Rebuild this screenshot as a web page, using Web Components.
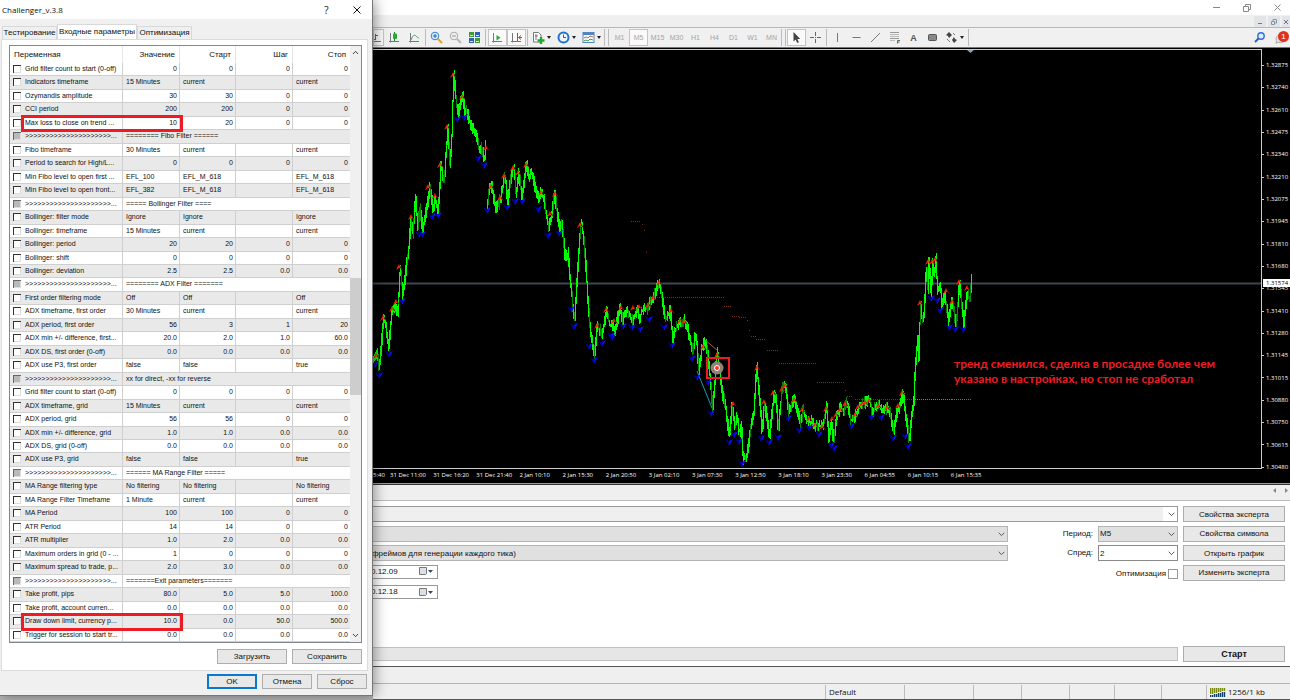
<!DOCTYPE html>
<html lang="ru">
<head>
<meta charset="utf-8">
<title>Challenger_v.3.8</title>
<style>
  html, body { margin: 0; }
  body {
    --ui: "Liberation Sans", Arial, sans-serif;
    --seg: "Open Sans", "Noto Sans", sans-serif;
    font: 8px/12px var(--ui);
    color: #111;
    background: #b4b4b4;
    min-height: 100vh;
    display: grid;
    grid-template-columns: 373px minmax(0, 1fr);
    align-items: start;
    overflow: hidden;
  }
  params-dialog { z-index: 1; }
</style>
</head>
<body>
<params-dialog heading="Challenger_v.3.8"></params-dialog>
<terminal-window>
  <terminal-toolbar></terminal-toolbar>
  <price-chart>тренд сменился, сделка в просадке более чем<br>указано в настройках, но стоп не сработал</price-chart>
  <strategy-tester></strategy-tester>
  <status-bar></status-bar>
</terminal-window>

<script>
const define = (name, html, setup) => customElements.define(name, class extends HTMLElement {
  connectedCallback() {
    if (this.shadowRoot) return;
    this.attachShadow({ mode: "open" }).innerHTML = html;
    if (setup) setup(this, this.shadowRoot);
  }
});

/* ---------- push button ---------- */
define("push-button", `
<style>
  :host { display: block; }
  button { box-sizing: border-box; width: 100%; height: 100%; margin: 0; padding: 0; border: 1px solid #adadad;
    background: #e8e8e8; color: #111; font: inherit; line-height: 13px; white-space: nowrap; }
  :host([primary]) button { border: 2px solid #0a78d0; line-height: 11px; }
</style>
<button type="button"><slot></slot></button>`);

/* ---------- drop-down ---------- */
define("drop-down", `
<style>
  :host { display: block; position: relative; min-width: 0; }
  select { appearance: none; box-sizing: border-box; display: block; width: 100%; height: 100%; margin: 0; padding: 0 14px 0 1px;
    border: 1px solid #b4b4b4; border-radius: 0; background: #e0e0e0; color: #111; font: inherit; line-height: 13px; }
  :host([open-left]) select { border-left: 0; padding-left: 0; text-indent: -1px; }
  :host([plain]) select { background: #fff; border-color: #8a8a8a; }
  :host([long]) select { background: linear-gradient(90deg, #efefef calc(100% - 14px), #fff 0); border-color: #999; }
  svg { position: absolute; right: 3px; top: 6px; pointer-events: none; }
</style>
<select><option></option></select>
<svg width="7" height="5" fill="none" stroke="#555"><path d="M.7.8 3.500 3.600 6.300.8"/></svg>`,
(el, root) => {
  root.querySelector("option").textContent = el.getAttribute("value") || "";
  root.querySelector("select").setAttribute("aria-label", el.getAttribute("label"));
});

/* ---------- parameter table ---------- */
const SEP = ">>>>>>>>>>>>>>>>>>>>>...";
const ROWS = [
  ["Grid filter count to start (0-off)", "0", "0", "0", "0"],
  ["Indicators timeframe", "15 Minutes", "current", "", "current"],
  ["Ozymandis amplitude", "30", "30", "0", "0"],
  ["CCI period", "200", "200", "0", "0"],
  ["Max loss to close on trend ...", "10", "20", "0", "0", "marked"],
  [SEP, "======== Fibo Filter ======"],
  ["Fibo timeframe", "30 Minutes", "current", "", "current"],
  ["Period to search for High/L...", "0", "0", "0", "0"],
  ["Min Fibo level to open first ...", "EFL_100", "EFL_M_618", "", "EFL_M_618"],
  ["Min Fibo level to open front...", "EFL_382", "EFL_M_618", "", "EFL_M_618"],
  [SEP, "===== Bollinger Filter ===="],
  ["Bollinger: filter mode", "Ignore", "Ignore", "", "Ignore"],
  ["Bollinger: timeframe", "15 Minutes", "current", "", "current"],
  ["Bollinger: period", "20", "20", "0", "0"],
  ["Bollinger: shift", "0", "0", "0", "0"],
  ["Bollinger: deviation", "2.5", "2.5", "0.0", "0.0"],
  [SEP, "======== ADX Filter ======="],
  ["First order filtering mode", "Off", "Off", "", "Off"],
  ["ADX timeframe, first order", "30 Minutes", "current", "", "current"],
  ["ADX period, first order", "56", "3", "1", "20"],
  ["ADX min +/- difference, first...", "20.0", "2.0", "1.0", "60.0"],
  ["ADX DS, first order (0-off)", "0.0", "0.0", "0.0", "0.0"],
  ["ADX use P3, first order", "false", "false", "", "true"],
  [SEP, "xx for direct, -xx for reverse"],
  ["Grid filter count to start (0-off)", "0", "0", "0", "0"],
  ["ADX timeframe, grid", "15 Minutes", "current", "", "current"],
  ["ADX period, grid", "56", "56", "0", "0"],
  ["ADX min +/- difference, grid", "1.0", "1.0", "0.0", "0.0"],
  ["ADX DS, grid (0-off)", "0.0", "0.0", "0.0", "0.0"],
  ["ADX use P3, grid", "false", "false", "", "true"],
  [SEP, "====== MA Range Filter ====="],
  ["MA Range filtering type", "No filtering", "No filtering", "", "No filtering"],
  ["MA Range Filter Timeframe", "1 Minute", "current", "", "current"],
  ["MA Period", "100", "100", "0", "0"],
  ["ATR Period", "14", "14", "0", "0"],
  ["ATR multiplier", "1.0", "2.0", "0.0", "0.0"],
  ["Maximum orders in grid (0 - ...", "1", "0", "0", "0"],
  ["Maximum spread to trade, p...", "2.0", "3.0", "0.0", "0.0"],
  [SEP, "=======Exit parameters======="],
  ["Take profit, pips", "80.0", "5.0", "5.0", "100.0"],
  ["Take profit, account curren...", "0.0", "0.0", "0.0", "0.0"],
  ["Draw down limit, currency p...", "10.0", "0.0", "50.0", "500.0", "marked"],
  ["Trigger for session to start tr...", "0.0", "0.0", "0.0", "0.0"]
];
define("param-table", `
<style>
  :host { display: grid; grid-template-columns: minmax(0, 1fr) 11px; border: 1px solid #828790; background: #fff; font-size: 7px; line-height: 12px; }
  table, thead, tbody { display: block; }
  tr { display: grid; grid-template-columns: 113px 57px 56px 57px minmax(0, 1fr); position: relative; }
  thead tr { height: 17px; font-size: 8px; }
  thead th { font-weight: normal; text-align: right; padding: 3px 4px 0; border-right: 1px solid #e6e6e6; }
  thead th:first-child { text-align: left; }
  th:last-child, td:last-child { border-right: 0 !important; }
  tbody { display: grid; grid-auto-rows: 1fr; height: 579px; }
  tbody tr:nth-child(even) { background: #e9e9e9; }
  td { padding: 0 2px 0 3px; border-right: 1px solid #cfcfcf; border-bottom: 1px solid #cfcfcf; text-align: right; white-space: nowrap; overflow: hidden; }
  td.t { text-align: left; }
  td.wide { grid-column: span 4; }
  label { display: flex; align-items: center; gap: 4px; }
  input { appearance: none; box-sizing: border-box; flex: none; width: 8px; height: 8px; margin: 0; background: #fff;
    border: solid #333; border-width: 1px 0 0 1px; box-shadow: inset -1px -1px #ddd; }
  input:disabled { background: #b9b9b9; border-color: #666; }
  tr.marked { z-index: 1; }
  tr.marked::after { content: ""; position: absolute; left: 11px; top: -2px; bottom: -2px; width: 156px; border: 3px solid #ed1c24; }
  .bar { background: #f0f0f0; display: flex; flex-direction: column; justify-content: space-between; align-items: center; padding: 4px 0; position: relative; }
  .bar i { position: absolute; left: 0; right: 0; top: 39%; height: 117px; background: #cdcdcd; }
</style>
<table>
  <thead><tr><th>Переменная</th><th>Значение</th><th>Старт</th><th>Шаг</th><th>Стоп</th></tr></thead>
  <tbody></tbody>
</table>
<div class="bar">
  <svg width="7" height="5" fill="none" stroke="#444"><path d="M1 4 3.500 1.300 6 4"/></svg><i></i>
  <svg width="7" height="5" fill="none" stroke="#444"><path d="M1 1 3.500 3.700 6 1"/></svg>
</div>`,
(el, root) => {
  const num = s => /^\d+(\.\d+)?$/.test(s);
  root.querySelector("tbody").innerHTML = ROWS.map(([name, ...v]) => {
    const sep = v.length === 1, mark = v[4] ? ' class="marked"' : "";
    const cells = sep ? `<td class="t wide">${v[0]}</td>`
      : v.slice(0, 4).map(c => `<td${num(c) ? "" : ' class="t"'}>${c}</td>`).join("");
    return `<tr${mark}><td class="t"><label><input type="checkbox"${sep ? " disabled" : ""}>${name.replace(/>/g, "&gt;")}</label></td>${cells}</tr>`;
  }).join("");
});

/* ---------- dialog ---------- */
define("params-dialog", `
<style>
  :host { display: flex; flex-direction: column; box-sizing: border-box; height: 696px; background: #f0f0f0;
    border-right: 1px solid #777; border-bottom: 1px solid #777; box-shadow: 2px 0 12px rgba(0,0,0,.4); }
  header { display: flex; align-items: center; height: 19px; background: #fff; padding: 0 10px 0 2px; font-family: var(--seg); }
  header span { flex: 1; }
  header button { width: 31px; height: 18px; border: 0; padding: 0; background: none; font: 10px var(--seg); color: #111; }
  header button:last-child { width: 30px; margin-right: -10px; }
  nav { display: flex; align-items: flex-end; height: 20px; padding-left: 2px; }
  nav button { height: 13px; border: 1px solid #d9d9d9; border-bottom: 0; background: #f0f0f0; padding: 0; font: inherit; color: #111; width: 55px; white-space: nowrap; }
  nav button.on { width: 80px; height: 15px; background: #fff; }
  main { flex: 1; display: flex; flex-direction: column; background: #fff; border: 1px solid #dcdcdc; margin: 0 4px 0 1px; padding: 5px 5px 0 7px; }
  .row { display: flex; justify-content: flex-end; gap: 5px; }
  .row push-button { width: 70px; height: 15px; }
  main .row { padding-top: 6px; }
  footer { padding: 3px 5px 6px; }
  footer push-button { width: 50px !important; }
</style>
<header><span></span><button type="button" aria-label="Справка">?</button><button type="button" aria-label="Закрыть"><svg width="8" height="8" stroke="#111"><path d="M.5.5l7 7M7.500.5l-7 7"/></svg></button></header>
<nav><button type="button">Тестирование</button><button type="button" class="on">Входные параметры</button><button type="button">Оптимизация</button></nav>
<main><param-table></param-table><div class="row"><push-button>Загрузить</push-button><push-button>Сохранить</push-button></div></main>
<footer class="row"><push-button primary>OK</push-button><push-button>Отмена</push-button><push-button>Сброс</push-button></footer>`,
(el, root) => { root.querySelector("header span").textContent = el.getAttribute("heading"); });

/* ---------- main window frame ---------- */
define("terminal-window", `
<style>
  :host { display: flex; flex-direction: column; height: 100vh; min-height: 700px; background: #efefef; }
  .cap { height: 15px; background: #fff; display: flex; justify-content: flex-end; align-items: center; gap: 23px; padding-right: 9px; }
  .mdi { height: 13px; display: flex; justify-content: flex-end; gap: 2px; padding-top: 1px; box-sizing: border-box; border-bottom: 1px solid #b8b8b8; }
  button { border: 0; padding: 0; background: none; display: flex; align-items: center; justify-content: center; }
  .mdi button { width: 12px; background: #e2e4e8; }
  .mdi button:last-child { width: 8px; }
  ::slotted(price-chart) { flex: 1; }
</style>
<div class="cap">
  <button type="button" aria-label="Свернуть"><svg width="7" height="7" stroke="#888"><path d="M0 3.500h7"/></svg></button>
  <button type="button" aria-label="Развернуть"><svg width="8" height="8" fill="none" stroke="#888"><path d="M.5 2.500h5v5h-5zM2.500 2.500v-2h5v5h-2"/></svg></button>
  <button type="button" aria-label="Закрыть"><svg width="7" height="7" stroke="#888"><path d="M.5.5l6 6M6.500.5l-6 6"/></svg></button>
</div>
<div class="mdi">
  <button type="button" aria-label="Свернуть окно"><svg width="6" height="6" stroke="#667c96"><path d="M1 4.500h4"/></svg></button>
  <button type="button" aria-label="Восстановить окно"><svg width="6" height="6" fill="none" stroke="#8093aa"><path d="M.5 2.500h3v3h-3zM2 2V.5h3.500V4H4"/></svg></button>
  <button type="button" aria-label="Закрыть окно"><svg width="6" height="6" stroke="#667c96"><path d="M1 1l4 4M5 1l-4 4"/></svg></button>
</div>
<slot></slot>`);

/* ---------- toolbar ---------- */
const axis = `<path d="M2.500 2v9.500M1 10.500h10" stroke="#777"/>`;
const ICON = {
  bars: axis + `<path d="M5.500 3v6M4 8.500h1.500M5.500 4.500H8" stroke="#2a8a3a"/>`,
  candles: axis + `<path d="M6.500 1v9" stroke="#18852a"/><rect x="5" y="2.500" width="4" height="5.500" rx="1" fill="#27a83c"/>`,
  line: axis + `<path d="M3 9C5 3 7 4 8 5s2 2 3 2" stroke="#4aa05a"/>`,
  zin: `<path d="M8 8l4 4" stroke="#d9a528" stroke-width="2"/><circle cx="5" cy="5" r="3.800" fill="#d6ecff" stroke="#3a82c8"/><path d="M3 5h4M5 3v4" stroke="#2565b8"/>`,
  zout: `<path d="M8 8l4 4" stroke="#b4b4b4" stroke-width="2"/><circle cx="5" cy="5" r="3.800" fill="#eee" stroke="#aaa"/><path d="M3 5h4" stroke="#999"/>`,
  tiles: `<path d="M1 1h5v5H1zM7 7h5v5H7z" fill="#3e9c30"/><path d="M7 1h5v5H7zM1 7h5v5H1z" fill="#2b62b8"/><path d="M2 4.500h3M8 4.500h3M2 10.500h3M8 10.500h3" stroke="#dfe9f4"/>`,
  scroll: axis + `<path d="M5.500 4l4 2.800-4 2.800z" fill="#2ca53b"/>`,
  shift: axis + `<path d="M7.500 2v8" stroke="#3b6fa8"/><path d="M9 6.500h3M11 4.500l-2.500 2 2.500 2" stroke="#c04828"/>`,
  doc: `<path d="M1.500 1.500h5l2.500 2.500v7H1.500z" fill="#fff" stroke="#777"/><path d="M4 3v6M3 5h3" stroke="#777"/><path d="M9 6v7M5.500 9.500h7" stroke="#1cab2b" stroke-width="2.400"/>`,
  clock: `<circle cx="6.500" cy="6.500" r="5" fill="#eef6ff" stroke="#2472c8" stroke-width="2"/><path d="M6.500 3.500v3h2.500" stroke="#555"/>`,
  tmpl: `<rect x="1" y="1.500" width="11" height="10" fill="#fff" stroke="#5684bc"/><path d="M1 3h11" stroke="#4a86cc" stroke-width="2"/><path d="M2 7l2-1 2 1 2-2 3 1" stroke="#c06030"/><path d="M2 10l2-1 2 1 2-2 3 1" stroke="#3a9a48"/>`,
  cursor: `<path d="M3.500 1v9.500l2.200-2 1.500 3.500 1.700-.8-1.500-3.200h2.900z" fill="#444"/>`,
  cross: `<path d="M6.500 1v4M6.500 8v4M1 6.500h4M8 6.500h4M6 6.500h1" stroke="#666"/>`,
  vline: `<path d="M6.500 2v9" stroke="#777"/>`,
  hline: `<path d="M2.500 6.500h8" stroke="#777"/>`,
  trend: `<path d="M2 11l9-9" stroke="#777"/>`,
  fibo: `<path d="M2 1.500h9M2 7.500h9" stroke="#999"/><path d="M2 3.500h9M2 5.500h9M2 9.500h5" stroke="#bbb"/><path d="M9.500 12.500V9.500H12M9.500 11h2" stroke="#666"/>`,
  rect: `<rect x="2.500" y="3.500" width="8" height="6" rx="1" fill="#888" stroke="#555"/>`,
  arrows: `<path d="M4 1l3 3-3 3-1-2-2-1zM9 6l1 2 2 1-3 3-2-3z" fill="#444"/><path d="M2 8l3 3M8 2l2 2" stroke="#777"/>`,
  search: `<circle cx="8" cy="5" r="3.200" fill="#dce9ff" stroke="#3370d8" stroke-width="1.400"/><path d="M5.500 7.500L2 11" stroke="#2c5fcb" stroke-width="2"/>`
};
const svgIcon = n => `<svg width="13" height="13" fill="none">${ICON[n]}</svg>`;
const TOOLS = ["first bars on", "wide candles", "line", "|", "zin", "zout", "tiles", "||", "scroll on", "shift on", "|",
  "drop doc", "drop clock", "drop tmpl", "|||", "=M1", "=M5 on", "=M15", "=M30", "=H1", "=H4", "=D1", "=W1", "=MN", "|||",
  "cursor on", "cross", "|", "vline", "hline", "trend", "fibo", "=A dark", "rect", "drop arrows", "|"];
define("terminal-toolbar", `
<style>
  :host { display: flex; align-items: stretch; height: 20px; background: #f0f0f0; padding: 1px 0; box-sizing: border-box; border-bottom: 1px solid #777; }
  button { box-sizing: border-box; border: 0; padding: 0; background: none; width: 19px; display: flex; align-items: center; justify-content: center; font: 7px var(--ui); color: #a4a4a4; }
  button.on { background: #fafafa; border: 1px solid #c4c4c4; }
  button.dark { color: #555; font-weight: bold; font-size: 9px; }
  button.first { width: 11px; justify-content: flex-end; overflow: hidden; }
  button.wide { width: 21px; }
  button.drop { width: 25px; justify-content: flex-start; padding-left: 3px; gap: 2px; }
  button.drop::after { content: ""; border: 2px solid transparent; border-top: 3px solid #222; border-bottom: 0; }
  svg { flex: none; }
  i { width: 3px; box-sizing: border-box; background: linear-gradient(#bbb, #bbb) 1px 0 / 1px 100% no-repeat; }
  i.b { width: 4px; }
  i.c { width: 6px; border-left: 1px solid #bbb; background-position: 3px 0; }
  .gap { flex: 1; }
  .chat { width: 21px; position: relative; }
  .badge { position: absolute; right: 1px; top: 2px; width: 11px; height: 11px; border-radius: 50%; background: #dc3320; color: #fff; font: 8px/11px var(--ui); text-align: center; }
</style>`,
(el, root) => {
  const html = TOOLS.map(t => {
    if (t[0] === "|") return `<i class="${["a", "b", "c"][t.length - 1]}"></i>`;
    if (t[0] === "=") { const [n, c = ""] = t.slice(1).split(" "); return `<button type="button" class="${c}">${n}</button>`; }
    const parts = t.split(" "), name = parts.find(p => ICON[p]);
    return `<button type="button" aria-label="${name}" class="${parts.filter(p => p !== name).join(" ")}">${svgIcon(name)}</button>`;
  }).join("");
  root.innerHTML += html + `<span class="gap"></span><button type="button" aria-label="search">${svgIcon("search")}</button>
    <button type="button" class="chat" aria-label="messages"><svg width="13" height="13"><path d="M6 4a5 4 0 1 1-1 7l-2 1.500.5-3A4 4 0 0 1 6 4z" fill="#e4e4e4" stroke="#aaa"/></svg><span class="badge">1</span></button>`;
});

/* ---------- chart ---------- */
/* Points are stored in thirds of a pixel, one list per section of the price history. */
const at = (ox, oy, list) => list.trim().split(/\s+/).map(p => { const [x, y] = p.split(","); return [ox + x / 3, oy + y / 3]; });
const A = [-3, 10], B = [207, 150], C = [427, 190];
const SERIES = [
  at(...A, "10,885 20,875 27,925 33,850 40,765 48,800 55,865 65,745 75,730 82,765 90,610 98,705 105,640 115,560 122,470 128,520 136,400 142,500 148,435 157,505 170,435 179,370 188,450 195,410 203,450 212,310 221,365 233,190 238,310 244,240 250,32 255,95 262,160 277,98 283,150 290,150 300,185 318,225 328,275 335,260 342,298 347,250"),
  at(...A, "352,432 357,380 363,368 375,440 385,430 393,400 404,340 412,420 422,350 431,312 437,400 445,325 455,405 468,305 475,345 484,335 495,380 505,410 513,390 522,420 535,505 545,450 553,395 560,450 568,500 575,490 585,590 592,570 600,660 607,730 613,780 620,650 631,490").concat(
  at(...B, "5,75 10,110 17,200 25,330 33,410 44,460 50,375 60,390 66,400 78,325 88,370 97,370 103,395 118,320 128,360 132,325 145,335 157,360 170,320 180,365 182,330 200,320 218,290 237,240 245,290 255,355 270,325 277,415 285,385 295,370 313,355 322,380 337,455 343,410 349,420 355,510 365,440 375,420 382,460 387,500 395,600 398,620 404,530 410,450 418,500 427,580 435,610 447,705 455,610 465,680 470,640 477,700 483,660 488,770 498,770 505,730 512,670 520,640 529,490 537,580 545,695 552,605 568,705 580,580 587,590 594,690 605,560 615,550 625,635 640,595 648,610 660,670 668,620"),
  at(...C, "20,540 32,540 50,555 68,550 80,495 85,590 92,540 100,600 107,530 120,500 130,510 140,480 152,540 165,525 180,490 208,475 215,510 235,490 245,510 262,500 272,520 280,575 287,520 300,490 308,450 318,540 327,600 333,530 340,490 345,370 352,290 356,350 360,180 366,240 372,210 378,70 383,150 386,50 392,160 398,60 402,120 406,45 412,150 420,120 425,200 432,160 445,240 455,180 468,250 478,115 490,250 500,150 508,180 515,105"))
];
const UPS = [].concat(
  at(...A, "18,888 38,775 65,748 78,725 88,622 122,472 175,382 195,408 210,314 232,202 249,45 275,110 347,263 364,380 390,414 402,348 428,324 444,338 467,316 512,398 540,463 554,403 631,496"),
  at(...B, "52,378 78,330 102,362 122,325 158,325 178,320 203,315 218,295 236,248 272,332 299,362 313,365 368,440 410,465 458,612 530,503 552,606 580,580 605,566 614,558 641,600"),
  at(...C, "6,510 28,538 45,555 65,560 79,507 95,538 107,526 120,510 136,492 165,524 175,500 185,492 196,490 207,484 235,498 262,505 294,498 305,460 361,190 383,67 396,66 404,60 437,153 457,187 477,127 500,143"));
const DOWNS = [].concat(
  at(...A, "16,913 27,944 56,882 97,722 148,522 156,522 186,468 205,466 260,176 283,170 325,294 343,316 351,450 412,440 435,423 455,424 505,446 533,526 568,520 604,747 612,797"),
  at(...B, "28,437 42,480 66,429 92,404 97,411 130,378 156,382 180,388 207,356 252,380 276,436 336,475 350,530 383,547 394,640 446,725 463,703 476,722 486,790 544,715 567,726 593,710 625,655"),
  at(...C, "-3,570 27,560 57,583 93,615 103,624 152,558 214,532 243,531 278,593 316,587 325,618 392,175 412,180 421,211 447,260 465,268 490,266"));
const DOTS = [[258,171,268],[269,174,271],[271,180,273],[273,202,275],[282,247,351],[351,256,359],[359,266,366],[366,267,373],[374,270,376],[376,280,377],[378,286,383],[383,289,393],[394,300,405],[406,313,444],[444,332,471],[472,340,473],[474,346,480],[482,349,540]];
const PRICES = "1.32875 1.32740 1.32610 1.32475 1.32340 1.32210 1.32075 1.31945 1.31810 1.31680 1.31545 1.31410 1.31280 1.31145 1.31015 1.30880 1.30750 1.30615 1.30480".split(" ");
const TIMES = ["31 Dec 11:00", "31 Dec 16:20", "31 Dec 21:40", "2 Jan 10:10", "2 Jan 15:30", "2 Jan 20:50", "3 Jan 02:10", "3 Jan 07:30", "3 Jan 12:50", "3 Jan 18:10", "3 Jan 23:30", "6 Jan 04:55", "6 Jan 10:15", "6 Jan 15:35"];
define("price-chart", `
<style>
  :host { display: grid; grid-template: minmax(0, 1fr) 14px / minmax(0, 1fr) 28px; background: #000; color: #fff;
    font: 6px/8px var(--seg); border-top: 1px solid #000; border-bottom: 1px solid #999; }
  .plot { position: relative; border: solid #ccc; border-width: 1px 1px 1px 0; overflow: hidden; }
  svg { display: block; width: 100%; height: 100%; }
  .note { position: absolute; left: 581px; top: 306px; color: #ed1c24; font: bold 12px/15px Lato, var(--seg); white-space: nowrap; }
  .prices { position: relative; display: flex; flex-direction: column; justify-content: space-between; padding: 12px 0 0; margin-bottom: -2px; }
  .prices span::before { content: ""; display: inline-block; width: 2px; height: 1px; background: #ccc; vertical-align: middle; margin-right: 2px; }
  .now { position: absolute; left: 1px; right: 0; top: 230px; background: #fff; color: #000; padding-left: 3px; font-weight: normal; }
  .times { display: grid; grid-template-columns: 17px repeat(14, minmax(0, 1fr)); width: 621px; grid-column: span 2; padding-top: 2px; white-space: nowrap; }
</style>
<div class="plot"><svg aria-label="chart"></svg><div class="note"><slot></slot></div></div>
<div class="prices">${PRICES.map(p => `<span>${p}</span>`).join("")}<b class="now">1.31574</b></div>
<div class="times"><span>5:40</span>${TIMES.map(t => `<span>${t}</span>`).join("")}</div>`,
(el, root) => {
  let seed = 7;
  const rnd = () => (seed = (seed * 16807) % 2147483647) / 2147483647;
  let bright = "", dark = "";
  for (const s of SERIES) {
    const ys = x => {
      let i = 1;
      while (i < s.length - 1 && s[i][0] < x) i++;
      const [x0, y0] = s[i - 1], [x1, y1] = s[i];
      return y0 + (y1 - y0) * Math.max(0, Math.min(1, (x - x0) / (x1 - x0)));
    };
    const end = s[s.length - 1][0];
    for (let x = Math.round(s[0][0]); x <= end; x++) {
      const a = ys(x - 0.5), b = ys(x + 0.5);
      const top = Math.round(Math.min(a, b) - rnd() * 6 + 1), bottom = Math.round(Math.max(a, b) + 2 + rnd() * 6);
      const d = `M${x}.5 ${top}V${bottom}`;
      if (rnd() < 0.18) dark += d; else bright += d;
    }
  }
  const up = UPS.map(([x, y]) => `<use href="#up" x="${Math.round(x)}" y="${Math.round(y)}"/>`).join("");
  const down = DOWNS.map(([x, y]) => `<use href="#dn" x="${Math.round(x)}" y="${Math.round(y)}"/>`).join("");
  const dots = DOTS.map(([x, y, e]) => `M${x} ${y}.5H${e}`).join("");
  root.querySelector("svg").innerHTML = `
    <defs>
      <g id="up"><path d="M0-3L4 3 1 1z" fill="#7a1208"/><path d="M0-3L-3 3 0 1z" fill="#ff1a08"/><path d="M0-3l1 4H0z" fill="#f40"/></g>
      <g id="dn"><path d="M0 4L-4-3-1-1z" fill="#0000a0"/><path d="M0 4L4-3 0-1z" fill="#1010ff"/><path d="M-1-1h2L0 4z" fill="#00c"/></g>
    </defs>
    <path d="M0 233.500H2000" stroke="#3c4853" stroke-width="2"/>
    <path d="${dots}" stroke="#7a3020" stroke-dasharray="1 1"/>
    <path d="M540 349.500H579" stroke="#8a8a20" stroke-dasharray="1 1"/><path d="M579 349.500H599" stroke="#5a7684" stroke-dasharray="1 1"/>
    <path d="${dark}" stroke="#008a00"/><path d="${bright}" stroke="#0f0"/>
    <path d="M332 290l12 10" stroke="#a05a50"/><path d="M324 321l15 37" stroke="#12a0a0"/>
    ${up}${down}
    <circle cx="344" cy="318" r="6.500" fill="#8d8478"/><circle cx="344" cy="318" r="2.500" fill="#f33" stroke="#fff"/>
    <rect x="334" y="308" width="22" height="20" fill="none" stroke="#ed1c24" stroke-width="2"/>
    <path d="M594 0h7l-3.500 3z" fill="#8aa0b0"/>`;
});

/* ---------- strategy tester ---------- */
define("strategy-tester", `
<style>
  :host { display: block; background: #fff; border-top: 1px solid #333; }
  .strip { height: 16px; background: #efefef; border-bottom: 1px solid #bbb; display: flex; justify-content: flex-end; align-items: center; gap: 9px; padding: 0 2px 5px 0; box-sizing: border-box; }
  .strip button { border: 0; padding: 0; background: none; display: flex; }
  .body { padding: 5px 5px 4px 0; }
  .form { display: grid; grid-template-columns: 635px minmax(0, 1fr) 80px 102px; column-gap: 5px; grid-auto-rows: 16px; align-content: space-between; height: 75px; }
  .full { grid-column: 1 / 4; }
  .form label { text-align: right; line-height: 16px; }
  .date { display: flex; align-items: center; width: 65px; border: 1px solid #999; box-sizing: border-box; height: 14px; border-left: 0; padding-right: 3px; gap: 1px; }
  .date input { flex: 1; min-width: 0; border: 0; padding: 0; margin: 0; font: inherit; color: #111; background: none; text-indent: -2px; }
  .opt { grid-column: 2 / 4; display: flex; justify-content: flex-end; align-items: center; gap: 2px; padding-top: 2px; }
  .opt input { appearance: none; width: 10px; height: 10px; margin: 0; border: 1px solid #999; box-sizing: border-box; }
  .second { margin-top: 4px; }
  .go { display: grid; grid-template-columns: minmax(0, 1fr) 102px; column-gap: 5px; margin-top: 47px; }
  .go push-button { height: 16px; font-weight: bold; font-size: 9px; }
  .bar { align-self: center; height: 14px; box-sizing: border-box; border: 1px solid #c0c0c0; border-left: 0; background: #e6e6e6; }
</style>
<div class="strip">
  <button type="button" aria-label="Назад"><svg width="3" height="5"><path d="M3 0v5L0 2.500z" fill="#888"/></svg></button>
  <button type="button" aria-label="Вперёд"><svg width="3" height="5"><path d="M0 0v5l3-2.500z" fill="#888"/></svg></button>
</div>
<div class="body">
  <div class="form">
    <drop-down class="full" long open-left label="Эксперт"></drop-down><push-button>Свойства эксперта</push-button>
    <drop-down open-left label="Символ"></drop-down><label>Период:</label><drop-down label="Период" value="M5"></drop-down><push-button>Свойства символа</push-button>
    <drop-down open-left label="Модель" value="фреймов для генерации каждого тика)"></drop-down><label>Спред:</label><drop-down plain label="Спред" value="2"></drop-down><push-button>Открыть график</push-button>
    <div class="date"><input aria-label="С" value="0.12.09"></div>
    <label class="opt">Оптимизация<input type="checkbox"></label><push-button>Изменить эксперта</push-button>
  </div>
  <div class="date second"><input aria-label="По" value="0.12.18"></div>
  <div class="go"><div class="bar"></div><push-button>Старт</push-button></div>
</div>`,
(el, root) => root.querySelectorAll(".date").forEach(d => d.insertAdjacentHTML("beforeend",
  `<svg width="16" height="9"><path d="M1.500.5h7v6l-1 1h-6z" fill="#dcdfe6" stroke="#777"/><path d="M10 3h5l-2.500 3z" fill="#334a70"/></svg>`)));

/* ---------- status bar ---------- */
define("status-bar", `
<style>
  :host { display: block; background: #efefef; border-top: 1px solid #555; border-bottom: 1px solid #555; font-family: var(--seg); }
  .tabs { height: 16px; border-bottom: 1px solid #b4b4b4; }
  .cells { display: grid; grid-template-columns: minmax(0, 1fr) 79px 69px 48px 48px 45px 47px 45px 84px; height: 15px; padding-top: 1px; box-sizing: border-box; }
  span { border-left: 1px solid #bbb; padding-left: 3px; display: flex; align-items: center; gap: 2px; }
  span:first-child { border: 0; }
</style>
<div class="tabs"></div>
<div class="cells"><span></span><span>Default</span><span></span><span></span><span></span><span></span><span></span><span></span>
  <span><svg width="16" height="9" fill="none"><path d="M.5 0v6M2.500 0v6M4.500 0v5M6.500 0v5M8.500 0v4M10.500 0v4M12.500 0v3M14.500 0v3" stroke="#7a8a10" stroke-width="1.400"/><path d="M.5 7v2M2.500 7v2M4.500 6v3M6.500 6v3M8.500 5v4M10.500 5v4M12.500 4v5M14.500 4v5" stroke="#12406a" stroke-width="1.400"/></svg>1256/1 kb</span></div>`);
</script>
</body>
</html>
